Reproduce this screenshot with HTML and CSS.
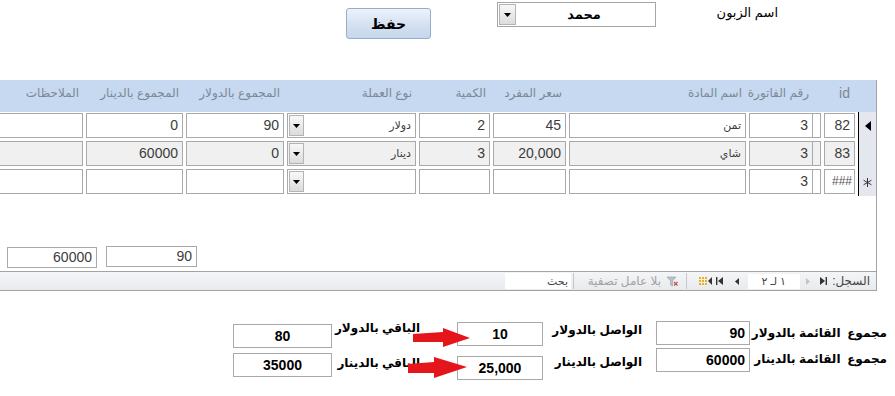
FILE: index.html
```html
<!DOCTYPE html>
<html lang="ar" dir="rtl">
<head>
  <meta charset="UTF-8">
  <title>فاتورة</title>
  <link rel="stylesheet" href="styles.css">
</head>
<body>

  <div class="topbar">
    <label class="cust-label">اسم الزبون</label>
    <div class="combo top-combo">
      <span class="combo-text">محمد</span>
      <span class="combo-btn"><svg width="7" height="4" viewBox="0 0 7 4"><polygon points="0,0 7,0 3.5,4" fill="#000"/></svg></span>
    </div>
    <button class="save-btn">حفظ</button>
  </div>

  <div class="sheet">
    <div class="grid head">
      <div class="hcell"></div>
      <div class="hcell id-head">id</div>
      <div class="hcell"></div>
      <div class="hcell">رقم الفاتورة</div>
      <div class="hcell">اسم المادة</div>
      <div class="hcell">سعر المفرد</div>
      <div class="hcell">الكمية</div>
      <div class="hcell">نوع العملة</div>
      <div class="hcell">المجموع بالدولار</div>
      <div class="hcell">المجموع بالدينار</div>
      <div class="hcell">الملاحظات</div>
    </div>

    <div class="grid row">
      <div class="sel"><svg width="6" height="10" viewBox="0 0 6 10"><polygon points="6,0 0,5 6,10" fill="#000"/></svg></div>
      <div class="f">82</div>
      <div class="f"></div>
      <div class="f">3</div>
      <div class="f txt">تمن</div>
      <div class="f">45</div>
      <div class="f">2</div>
      <div class="f combo">
        <span class="combo-text txt">دولار</span>
        <span class="combo-btn"><svg width="7" height="4" viewBox="0 0 7 4"><polygon points="0,0 7,0 3.5,4" fill="#000"/></svg></span>
      </div>
      <div class="f">90</div>
      <div class="f">0</div>
      <div class="f"></div>
    </div>

    <div class="grid row alt">
      <div class="sel"></div>
      <div class="f">83</div>
      <div class="f"></div>
      <div class="f">3</div>
      <div class="f txt">شاي</div>
      <div class="f">20,000</div>
      <div class="f">3</div>
      <div class="f combo">
        <span class="combo-text txt">دينار</span>
        <span class="combo-btn"><svg width="7" height="4" viewBox="0 0 7 4"><polygon points="0,0 7,0 3.5,4" fill="#000"/></svg></span>
      </div>
      <div class="f">0</div>
      <div class="f">60000</div>
      <div class="f"></div>
    </div>

    <div class="grid row">
      <div class="sel"><svg width="9" height="9" viewBox="0 0 9 9"><path d="M4.5 0 V9 M0.6 2.25 L8.4 6.75 M0.6 6.75 L8.4 2.25" stroke="#333" stroke-width="1"/></svg></div>
      <div class="f hash">###</div>
      <div class="f"></div>
      <div class="f">3</div>
      <div class="f"></div>
      <div class="f"></div>
      <div class="f"></div>
      <div class="f combo">
        <span class="combo-text"></span>
        <span class="combo-btn"><svg width="7" height="4" viewBox="0 0 7 4"><polygon points="0,0 7,0 3.5,4" fill="#000"/></svg></span>
      </div>
      <div class="f"></div>
      <div class="f"></div>
      <div class="f"></div>
    </div>

    <div class="sheet-foot">
      <div class="tot">60000</div>
      <div class="tot wide">90</div>
    </div>

    <div class="nav">
      <span class="nav-label">السجل:</span>
      <svg class="nav-first" width="7" height="8" viewBox="0 0 7 8"><polygon points="0,0 5,4 0,8" fill="#333"/><rect x="5.6" y="0" width="1.4" height="8" fill="#333"/></svg>
      <svg class="nav-prev" width="4" height="7" viewBox="0 0 4 7"><polygon points="0,0 4,3.5 0,7" fill="#c4c4c4"/></svg>
      <span class="rec-box">١ لـ ٢</span>
      <svg class="nav-next" width="4" height="7" viewBox="0 0 4 7"><polygon points="4,0 0,3.5 4,7" fill="#333"/></svg>
      <svg class="nav-last" width="7" height="8" viewBox="0 0 7 8"><rect x="0" y="0" width="1.4" height="8" fill="#333"/><polygon points="7,0 2,4 7,8" fill="#333"/></svg>
      <svg class="nav-new" width="14" height="8" viewBox="0 0 14 8"><polygon points="14,0 10,4 14,8" fill="#333"/><g fill="#e5b320"><rect x="1" y="0" width="2" height="2"/><rect x="4" y="0" width="2" height="2"/><rect x="7" y="0" width="2" height="2"/><rect x="1" y="3" width="2" height="2"/><rect x="4" y="3" width="2" height="2"/><rect x="7" y="3" width="2" height="2"/><rect x="1" y="6" width="2" height="2"/><rect x="4" y="6" width="2" height="2"/><rect x="7" y="6" width="2" height="2"/></g></svg>
      <span class="nav-sep first-sep"></span>
      <svg class="nav-filter" width="11" height="11" viewBox="0 0 11 11"><polygon points="0,1 9,1 5.5,5 5.5,10 3.5,9 3.5,5" fill="#b9bfc8" stroke="#9aa1ab" stroke-width="0.6"/><path d="M7 6 L10.5 9.5 M10.5 6 L7 9.5" stroke="#c45050" stroke-width="1.2"/></svg>
      <span class="filter-text">بلا عامل تصفية</span>
      <span class="nav-sep second-sep"></span>
      <span class="search-box">بحث</span>
    </div>
  </div>

  <div class="summary">
    <div class="sum-col labels-a">
      <span class="sum-label">مجموع&nbsp; القائمة بالدولار</span>
      <span class="sum-label">مجموع&nbsp; القائمة بالدينار</span>
    </div>
    <div class="sum-col boxes-a">
      <span class="sum-box">90</span>
      <span class="sum-box">60000</span>
    </div>
    <div class="sum-col labels-b">
      <span class="sum-label">الواصل بالدولار</span>
      <span class="sum-label">الواصل بالدينار</span>
    </div>
    <div class="sum-col boxes-b">
      <span class="sum-box">10</span>
      <span class="sum-box">25,000</span>
    </div>
    <div class="sum-col labels-c">
      <span class="sum-label">الباقي بالدولار</span>
      <span class="sum-label">الباقي بالدينار</span>
    </div>
    <div class="sum-col boxes-c">
      <span class="sum-box">80</span>
      <span class="sum-box">35000</span>
    </div>

    <svg class="arrow arrow-one" width="57" height="19" viewBox="0 0 57 19"><polygon points="0,6 30,4 30,0 57,10 30,19 30,14 0,14" fill="#e4161c"/></svg>
    <svg class="arrow arrow-two" width="59" height="21" viewBox="0 0 59 21"><polygon points="0,7 26,5 26,0 59,10 26,21 26,16 0,16" fill="#e4161c"/></svg>
  </div>

</body>
</html>
```

FILE: styles.css
```css
html, body {
  margin: 0;
  background: #fff;
}
body {
  font-family: "Liberation Sans", "DejaVu Sans", sans-serif;
  color: #000;
  width: 895px;
  height: 396px;
  overflow: hidden;
}

/* top: customer + save */
.topbar {
  display: flex;
  align-items: flex-start;
  height: 80px;
  padding-right: 117px;
  box-sizing: border-box;
}
.cust-label {
  width: 60px;
  margin-top: 5px;
  font-size: 13px;
  line-height: 16px;
  white-space: nowrap;
}
.combo {
  display: flex;
  box-sizing: border-box;
  border: 1px solid #a6a6a6;
  background: #fff;
}
.combo-text {
  flex: 1;
  padding-right: 4px;
  white-space: nowrap;
  overflow: hidden;
}
.combo-btn {
  width: 14px;
  border-right: 1px solid #b4b4b4;
  background: linear-gradient(#f8f8f8, #dcdcdc);
  display: flex;
  align-items: center;
  justify-content: center;
}
.top-combo {
  width: 159px;
  height: 25px;
  margin-top: 2px;
  margin-right: 62px;
}
.top-combo .combo-text {
  text-align: center;
  font-weight: bold;
  font-size: 13px;
  line-height: 23px;
}
.top-combo .combo-btn {
  width: 15px;
  margin: 1px;
  border: 1px solid #b4b4b4;
}
.save-btn {
  width: 85px;
  height: 31px;
  margin-top: 8px;
  margin-right: 66px;
  padding: 0;
  border: 1px solid #97aecb;
  border-radius: 3px;
  background: linear-gradient(#eef3fa, #d6e2f2 50%, #c5d6ed);
  font: bold 14px "Liberation Sans", "DejaVu Sans", sans-serif;
  color: #000;
}

/* datasheet */
.sheet {
  width: 876px;
  margin-right: 18px;
  overflow: hidden;
  border-right: 1px solid #a3a3a3;
}
.grid {
  display: grid;
  grid-template-columns: 18px 31px 5px 64px 177px 73px 71px 129px 98px 97px 120px;
  column-gap: 3px;
}
.head {
  height: 32px;
  background: #c6d9f0;
  align-items: start;
}
.hcell {
  padding: 6px 4px 0 0;
  font-size: 12px;
  line-height: 15px;
  color: #7e8896;
  text-align: right;
  white-space: nowrap;
}
.hcell.id-head {
  font-size: 14px;
  padding-right: 5px;
}
.row {
  height: 28px;
  align-items: start;
}
.sel {
  height: 28px;
  border-left: 1px solid #000;
  background: #e4e8ee;
  display: flex;
  align-items: center;
  justify-content: center;
}
.f {
  box-sizing: border-box;
  height: 25px;
  margin-top: 1px;
  border: 1px solid #a9a9a9;
  background: #fff;
  padding: 0 4px;
  font-size: 14px;
  line-height: 23px;
  text-align: right;
  color: #3c3c3c;
  white-space: nowrap;
  overflow: hidden;
}
.row.alt .f {
  background: #f0f0f0;
}
.f.txt, .combo-text.txt {
  font-size: 11px;
}
.f.hash {
  font-size: 12px;
  color: #555;
  padding: 0 2px;
}
.f.combo {
  padding: 0;
}
.f.combo .combo-btn {
  width: 13px;
  margin: 1px 0 1px 1px;
  border: 1px solid #b4b4b4;
}

.sheet-foot {
  height: 75px;
  box-sizing: border-box;
  padding: 51px 7px 0 0;
  display: flex;
  direction: ltr;
  align-items: flex-start;
  gap: 9px;
}
.tot {
  width: 90px;
  height: 21px;
  box-sizing: border-box;
  border: 1px solid #a9a9a9;
  padding-right: 4px;
  text-align: right;
  font-size: 14px;
  line-height: 19px;
  color: #3c3c3c;
}
.tot.wide {
  width: 91px;
  margin-top: -1px;
}
.sheet-foot .tot:first-child {
  margin-left: 7px;
}

/* record navigation */
.nav {
  height: 18px;
  border-top: 1px solid #a3a3a3;
  border-bottom: 1px solid #a3a3a3;
  background: linear-gradient(#f4f5f7, #e8eaee);
  display: flex;
  align-items: center;
  font-size: 11px;
  color: #444;
}
.nav-label {
  width: 34px;
  margin-right: 6px;
  font-size: 12px;
  text-align: right;
  white-space: nowrap;
}
.nav-first { margin-right: 9px; }
.nav-prev { margin-right: 10px; }
.rec-box {
  width: 52px;
  height: 15px;
  margin-right: 6px;
  box-sizing: border-box;
  padding-right: 14px;
  background: #fff;
  line-height: 15px;
  color: #444;
}
.nav-next { margin-right: 9px; }
.nav-last { margin-right: 12px; }
.nav-new { margin-right: 4px; }
.nav-sep {
  width: 1px;
  height: 16px;
  background: #c3c6cc;
}
.first-sep { margin-right: 11px; }
.nav-filter { margin-right: 8px; }
.filter-text {
  width: 73px;
  margin-right: 6px;
  font-size: 12px;
  color: #a2a2a2;
  white-space: nowrap;
}
.second-sep { margin-right: 14px; }
.search-box {
  width: 66px;
  height: 16px;
  margin-right: 2px;
  box-sizing: border-box;
  padding-right: 3px;
  background: #fff;
  line-height: 16px;
  color: #444;
}

/* summary at the bottom */
.summary {
  position: relative;
  display: flex;
  padding-right: 8px;
}
.sum-col {
  display: flex;
  flex-direction: column;
}
.sum-label {
  font-size: 12px;
  font-weight: bold;
  line-height: 16px;
  white-space: nowrap;
}
.sum-box {
  box-sizing: border-box;
  height: 24px;
  border: 1px solid #a9a9a9;
  font-size: 14px;
  font-weight: bold;
  line-height: 22px;
  text-align: center;
}
.labels-a { width: 123px; padding-top: 34px; gap: 10px; }
.boxes-a { width: 94px; margin-right: 14px; padding-top: 30px; gap: 3px; }
.boxes-a .sum-box { text-align: right; padding-right: 4px; }
.labels-b { width: 86px; margin-right: 14px; padding-top: 31px; gap: 16px; }
.boxes-b { width: 86px; margin-right: 13px; padding-top: 31px; gap: 10px; }
.labels-c { width: 71px; margin-right: 37px; padding-top: 29px; gap: 19px; }
.boxes-c { width: 99px; margin-right: 17px; padding-top: 33px; gap: 5px; }

.arrow {
  position: absolute;
}
.arrow-one { left: 413px; top: 37px; }
.arrow-two { left: 408px; top: 66px; }
```
